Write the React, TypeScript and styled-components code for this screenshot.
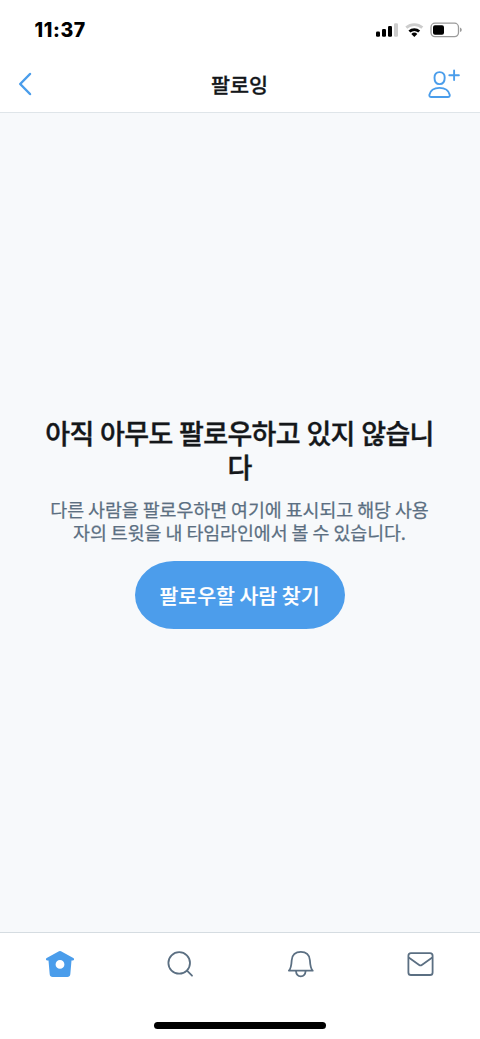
import React, { useState } from 'react';
import styled, { createGlobalStyle } from 'styled-components';

const GlobalStyle = createGlobalStyle`
  * {
    box-sizing: border-box;
  }

  body {
    margin: 0;
    background: #fff;
    font-family: 'Noto Sans CJK KR', sans-serif;
    -webkit-font-smoothing: antialiased;
  }
`;

const Screen = styled.div`
  display: flex;
  flex-direction: column;
  width: 100%;
  height: 1039px;
  background: #fff;
  overflow: hidden;
`;

const StatusBar = styled.div`
  display: flex;
  justify-content: space-between;
  align-items: center;
  height: 59px;
  padding: 0 18px 0 34.5px;
`;

const Clock = styled.span`
  font-family: Inter, sans-serif;
  font-size: 19.5px;
  font-weight: 800;
  letter-spacing: 0.6px;
  color: #000;
`;

const StatusIcons = styled.svg`
  display: block;
  width: 86px;
  height: 16px;
`;

const Header = styled.header`
  display: grid;
  grid-template-columns: 60px 1fr 60px;
  align-items: center;
  height: 54px;
  padding-bottom: 4px;
  border-bottom: 1px solid #dfe5e9;
`;

const IconButton = styled.button`
  display: flex;
  justify-content: center;
  align-items: center;
  height: 48px;
  padding: 0;
  border: none;
  background: none;
  color: #4a9deb;
  cursor: pointer;
`;

const BackButton = styled(IconButton)`
  justify-content: flex-start;
  padding-left: 18px;
`;

const AddButton = styled(IconButton)`
  justify-content: flex-start;
  padding-left: 8px;
`;

const HeaderTitle = styled.h1`
  margin: 0;
  padding-right: 1px;
  font-size: 20.7px;
  font-weight: 500;
  line-height: 30px;
  text-align: center;
  color: #14171a;
  -webkit-text-stroke: 0.3px currentColor;
`;

const Content = styled.main`
  display: flex;
  flex-direction: column;
  align-items: center;
  flex: 1;
  padding: 303px 40px 0;
  background: #f7f9fb;
`;

const EmptyTitle = styled.h2`
  width: 400px;
  margin: 0;
  padding-right: 1px;
  font-size: 27px;
  font-weight: 500;
  line-height: 34px;
  letter-spacing: -0.65px;
  word-spacing: 1px;
  text-align: center;
  color: #14171a;
  -webkit-text-stroke: 0.4px currentColor;
`;

const EmptyText = styled.p`
  width: 384px;
  margin: 14px 0 0;
  padding-right: 1px;
  font-size: 18.4px;
  font-weight: 400;
  line-height: 23px;
  letter-spacing: -0.06px;
  text-align: center;
  color: #5b6f82;
  -webkit-text-stroke: 0.25px currentColor;
`;

const FindButton = styled.button`
  width: 210px;
  height: 68px;
  margin-top: 17px;
  padding: 0 1px 1px 0;
  border: none;
  border-radius: 39px / 34px;
  background: #4c9deb;
  color: #fff;
  font-family: inherit;
  font-size: 20.5px;
  font-weight: 500;
  line-height: 30px;
  -webkit-text-stroke: 0.2px currentColor;
  cursor: pointer;
`;

const TabBar = styled.nav`
  display: grid;
  grid-template-columns: repeat(4, 1fr);
  height: 63px;
  border-top: 1px solid #d5dce1;
`;

const Tab = styled.button<{ $active: boolean }>`
  display: flex;
  justify-content: center;
  align-items: center;
  padding: 0;
  border: none;
  background: none;
  color: ${({ $active }) => ($active ? '#4a9deb' : '#5b6f82')};
  cursor: pointer;
`;

const HomeArea = styled.div`
  display: flex;
  justify-content: center;
  height: 44px;
  padding-top: 27px;
`;

const HomeIndicator = styled.div`
  width: 172px;
  height: 7px;
  border-radius: 3.5px;
  background: #000;
`;

const BackIcon = () => (
  <svg width="14" height="24" viewBox="0 0 14 24" fill="none">
    <path d="M12 2 2.2 12 12 22" stroke="currentColor" strokeWidth="2.5" strokeLinecap="round" strokeLinejoin="round" />
  </svg>
);

const AddPersonIcon = () => (
  <svg width="32" height="30" viewBox="0 0 32 30" fill="none" stroke="currentColor" strokeWidth="1.9" strokeLinecap="round" strokeLinejoin="round">
    <path d="M11.6 3.1C8.2 3.1 6.5 5.4 6.5 8.7C6.5 12.6 8.4 15.1 11.6 15.1C14.8 15.1 16.700 12.600 16.700 8.700C16.700 5.400 15 3.100 11.600 3.100Z" />
    <path d="M3.300 28H19.900C21.400 28 22 27.100 21.700 25.800C20.700 21.600 16.800 18.900 11.500 18.900C6.200 18.900 2.300 21.600 1.400 25.800C1.100 27.100 1.800 28 3.300 28Z" />
    <path d="M26.100 1.500V11.100M21.300 6.300H30.900" />
  </svg>
);

const HomeIcon = () => (
  <svg width="30" height="30" viewBox="0 0 30 30" fill="currentColor">
    <path
      fillRule="evenodd"
      d="M14 2.200Q15 1.700 16 2.200L28.300 9Q29.400 9.700 29 10.700Q28.700 11.500 27.700 11.500L26.500 11.500L25.300 25.300Q25 28 22.300 28H7.700Q5 28 4.700 25.300L3.500 11.500L2.300 11.500Q1.300 11.500 1 10.700Q0.600 9.700 1.700 9ZM15 11A4.400 4.400 0 1 0 15 19.800A4.400 4.400 0 1 0 15 11Z"
    />
  </svg>
);

const SearchIcon = () => (
  <svg width="30" height="30" viewBox="0 0 30 30" fill="none" stroke="currentColor" strokeWidth="1.8" strokeLinecap="round">
    <circle cx="14.200" cy="13.900" r="10.800" />
    <path d="M22 21.700 27 26.700" />
  </svg>
);

const BellIcon = () => (
  <svg width="30" height="30" viewBox="0 0 30 30" fill="none" stroke="currentColor" strokeWidth="1.8" strokeLinecap="round" strokeLinejoin="round">
    <path d="M3.900 21.700H27.700C25.700 19.600 25.200 16.500 24.900 11.200C24.600 5.900 21 2.800 15.800 2.800C10.600 2.800 7 5.900 6.700 11.200C6.400 16.500 5.900 19.600 3.900 21.700Z" />
    <path d="M11 22C11.200 25.200 13.100 27.300 15.800 27.300C18.500 27.300 20.400 25.200 20.600 22" />
  </svg>
);

const MailIcon = () => (
  <svg width="30" height="30" viewBox="0 0 30 30" fill="none" stroke="currentColor" strokeWidth="1.8" strokeLinejoin="round">
    <rect x="3.400" y="4.200" width="24.200" height="21.800" rx="2.600" />
    <path d="M3.700 8.600 14.200 15.900Q15.500 16.800 16.800 15.900L27.300 8.600" />
  </svg>
);

const tabs = [
  { name: '홈', Icon: HomeIcon },
  { name: '검색', Icon: SearchIcon },
  { name: '알림', Icon: BellIcon },
  { name: '쪽지', Icon: MailIcon },
];

const App: React.FC = () => {
  const [activeTab, setActiveTab] = useState(0);

  return (
    <>
      <GlobalStyle />
      <Screen>
        <StatusBar>
          <Clock>11:37</Clock>
          <StatusIcons viewBox="0 0 86 16">
            <rect x="0" y="9.500" width="4" height="5.300" rx="1.200" />
            <rect x="6" y="7" width="4" height="7.800" rx="1.200" />
            <rect x="12" y="4" width="4" height="10.800" rx="1.200" />
            <rect x="18" y="1.200" width="4" height="13.600" rx="1.200" fill="#ccc" />
            <g fill="none" strokeWidth="2.900">
              <path d="M30.300 5.700A12 12 0 0 1 46.300 5.700" stroke="#ccc" />
              <path d="M33.400 9.500A7.500 7.500 0 0 1 43.200 9.500" stroke="#000" />
            </g>
            <path d="M35.300 12A4.300 4.300 0 0 1 41.300 12L38.300 14.900Z" />
            <rect x="55" y="1.200" width="27.500" height="13.400" rx="4" fill="none" stroke="#9b9b9b" strokeWidth="1.300" />
            <rect x="57" y="3.200" width="11" height="9.500" rx="2" />
            <path d="M84 5.500Q85.800 6.200 85.800 7.800Q85.800 9.400 84 10.100Z" fill="#9b9b9b" />
          </StatusIcons>
        </StatusBar>
        <Header>
          <BackButton aria-label="뒤로">
            <BackIcon />
          </BackButton>
          <HeaderTitle>팔로잉</HeaderTitle>
          <AddButton aria-label="사람 추가">
            <AddPersonIcon />
          </AddButton>
        </Header>
        <Content>
          <EmptyTitle>아직 아무도 팔로우하고 있지 않습니다</EmptyTitle>
          <EmptyText>다른 사람을 팔로우하면 여기에 표시되고 해당 사용자의 트윗을 내 타임라인에서 볼 수 있습니다.</EmptyText>
          <FindButton>팔로우할 사람 찾기</FindButton>
        </Content>
        <TabBar>
          {tabs.map(({ name, Icon }, index) => (
            <Tab key={name} aria-label={name} $active={index === activeTab} onClick={() => setActiveTab(index)}>
              <Icon />
            </Tab>
          ))}
        </TabBar>
        <HomeArea>
          <HomeIndicator />
        </HomeArea>
      </Screen>
    </>
  );
};

export default App;
